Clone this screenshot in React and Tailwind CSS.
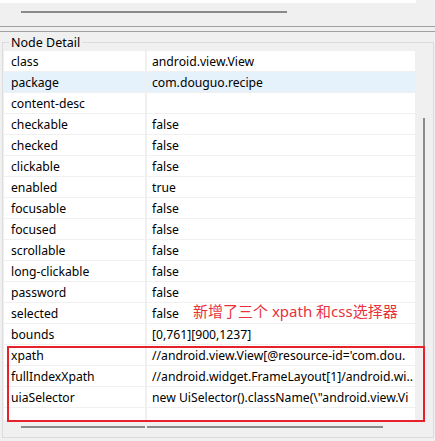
import React from "react";

const rows = [
  ["class", "android.view.View"],
  ["package", "com.douguo.recipe", true],
  ["content-desc", ""],
  ["checkable", "false"],
  ["checked", "false"],
  ["clickable", "false"],
  ["enabled", "true"],
  ["focusable", "false"],
  ["focused", "false"],
  ["scrollable", "false"],
  ["long-clickable", "false"],
  ["password", "false"],
  ["selected", "false"],
  ["bounds", "[0,761][900,1237]"],
  ["xpath", "//android.view.View[@resource-id='com.dou."],
  ["fullIndexXpath", "//android.widget.FrameLayout[1]/android.wi.."],
  ["uiaSelector", 'new UiSelector().className(\\"android.view.Vi'],
  ["", ""],
];

export default function App() {
  return (
    <div
      className="relative w-[435px] h-[441px] overflow-hidden bg-[#f0f0f0] text-black"
      style={{ fontFamily: '"Noto Sans", "Noto Sans CJK SC", sans-serif' }}
    >
      <div className="h-[3px] w-[416px] bg-white" />
      <div className="mt-[8px] ml-[21px] w-[266px] h-[2px] bg-[#8a8a8a]" />
      <div className="mt-[13px] h-[1px] bg-[#a0a0a0]" />
      <div className="h-[4px] bg-[#f0f0f0]" />
      <div className="h-[1px] bg-[#a0a0a0]" />
      <div className="relative mt-[10px] ml-[2px] w-[432px] h-[396px] border border-[#dcdcdc]">
        <div className="absolute left-[6px] top-[-8px] px-[2px] bg-[#f0f0f0] text-[12.5px] leading-[16px]">
          Node Detail
        </div>
        <div className="flex mt-[8px] ml-[1px]">
          <div className="w-[411px] h-[369px] bg-white flex flex-col">
            {rows.map(([k, v, hl], i) => (
              <div
                key={i}
                className={`flex h-[21px] shrink-0 border-b border-[#f0f0f0] ${hl ? "bg-[#e5f1fb]" : ""}`}
              >
                <div className="w-[141px] pl-[7px] pt-[1px] text-[12.2px] leading-[19px] whitespace-nowrap overflow-hidden">
                  {k}
                </div>
                <div className="w-[2px] bg-[#f0f0f0]" />
                <div className="flex-1 pl-[5px] pt-[1px] text-[12.2px] leading-[19px] whitespace-nowrap overflow-hidden">
                  {v}
                </div>
              </div>
            ))}
          </div>
          <div className="flex-1 relative">
            <div className="ml-[8px] mt-[67px] w-[2px] h-[285px] bg-[#8a8a8a]" />
          </div>
        </div>
        <div className="mt-[6px] ml-[18px] w-[362px] h-[2px] bg-[#8a8a8a]" />
      </div>

      <div className="absolute left-[7px] top-[346px] w-[418px] h-[76px] border-2 border-[#e6212a]" />
      <div
        className="absolute left-[193px] top-[300px] text-[15px] leading-[22px] text-[#e8323c] whitespace-nowrap"
        style={{ fontFamily: '"Noto Sans", "Noto Sans CJK SC", sans-serif' }}
      >
        新增了三个 xpath 和css选择器
      </div>
    </div>
  );
}
